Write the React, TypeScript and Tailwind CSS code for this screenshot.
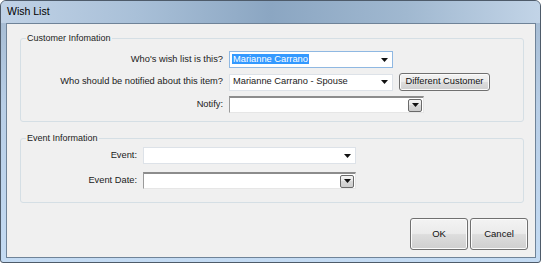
import React from "react"

function Arrow() {
  return (
    <svg width="7" height="4" viewBox="0 0 7 4" className="shrink-0">
      <polygon points="0,0 7,0 3.5,4" fill="#111" />
    </svg>
  )
}

function DropButton() {
  return (
    <div className="flex h-[13px] w-[14px] items-center justify-center rounded-[2px] border border-[#6a6a6a] bg-[linear-gradient(#f4f4f4,#e6e6e6_50%,#d8d8d8_50%,#cdcdcd)]">
      <Arrow />
    </div>
  )
}

function FlatCombo({ width, focused, children }: { width: string; focused?: boolean; children?: React.ReactNode }) {
  return (
    <div
      className={`flex h-[17px] items-center justify-between bg-white pl-[2px] pr-[4px] border ${width} ${
        focused ? "border-[#8fb8e2]" : "border-[#dde2e8]"
      }`}
    >
      <div className="truncate">{children}</div>
      <Arrow />
    </div>
  )
}

function SunkenCombo({ width }: { width: string }) {
  return (
    <div
      className={`flex h-[17px] items-center justify-end bg-white pr-[1px] border-t-2 border-l border-t-[#8c8c8c] border-l-[#9a9a9a] border-b border-r border-b-[#e6e6e6] border-r-[#e6e6e6] ${width}`}
    >
      <DropButton />
    </div>
  )
}

function WinButton({ className, children }: { className: string; children: React.ReactNode }) {
  return (
    <button
      className={`flex items-center justify-center rounded-[3px] border border-[#707070] bg-[linear-gradient(#f3f3f3,#ebebeb_48%,#dddddd_52%,#cfcfcf)] shadow-[inset_0_0_0_1px_#fbfbfb] text-[#111] ${className}`}
    >
      {children}
    </button>
  )
}

export default function App() {
  return (
    <div className="h-[264px] w-[541px] bg-white" style={{ fontFamily: '"Liberation Sans", Arial, sans-serif' }}>
      <div className="h-[263px] w-[541px] rounded-t-[6px] rounded-b-[3px] border border-[#4e5b6a] bg-[linear-gradient(to_bottom,#a3b9d0,#b8cee6_40%,#c4dbf3)]">
        {/* title bar */}
        <div className="flex h-[22px] items-center rounded-t-[5px] bg-[linear-gradient(to_right,#c0d2e6,#a9c0d8_25%,#8ba6c2_50%,#a0b8d0_75%,#c2d4e7)] pl-[6px] text-[10.5px] text-black">
          Wish List
        </div>

        <div className="ml-[5px] h-[235px] w-[530px] border border-[#6f8398] bg-[#f0f0f0] text-[9.3px] text-[#1b1b1b]">
          {/* Customer Information */}
          <div className="relative ml-[13px] mt-[14px] h-[84px] w-[504px] rounded-[3px] border border-[#d5dfe5]">
            <span className="absolute -top-[7px] left-[5px] bg-[#f0f0f0] px-[1px] text-[9px] leading-[12px]">
              Customer Infomation
            </span>
            <div className="mt-[12px] flex h-[17px] items-center">
              <div className="w-[202px] text-right">Who's wish list is this?</div>
              <div className="ml-[6px]">
                <FlatCombo width="w-[164px]" focused>
                  <span className="bg-[#3399ff] px-[1px] text-white">Marianne Carrano</span>
                </FlatCombo>
              </div>
            </div>
            <div className="mt-[5px] flex h-[18px] items-center">
              <div className="w-[202px] text-right">Who should be notified about this item?</div>
              <div className="ml-[6px]">
                <FlatCombo width="w-[164px]">
                  <span className="pl-[1px]">Marianne Carrano - Spouse</span>
                </FlatCombo>
              </div>
              <WinButton className="ml-[6px] h-[18px] w-[91px] text-[9.3px]">Different Customer</WinButton>
            </div>
            <div className="mt-[5px] flex h-[17px] items-center">
              <div className="w-[202px] text-right">Notify:</div>
              <div className="ml-[6px]">
                <SunkenCombo width="w-[195px]" />
              </div>
            </div>
          </div>

          {/* Event Information */}
          <div className="relative ml-[13px] mt-[16px] h-[65px] w-[504px] rounded-[3px] border border-[#d5dfe5]">
            <span className="absolute -top-[7px] left-[5px] bg-[#f0f0f0] px-[1px] text-[9px] leading-[12px]">
              Event Information
            </span>
            <div className="mt-[8px] flex h-[17px] items-center">
              <div className="w-[116px] text-right">Event:</div>
              <div className="ml-[6px]">
                <FlatCombo width="w-[213px]" />
              </div>
            </div>
            <div className="mt-[8px] flex h-[17px] items-center">
              <div className="w-[116px] text-right">Event Date:</div>
              <div className="ml-[6px]">
                <SunkenCombo width="w-[213px]" />
              </div>
            </div>
          </div>

          {/* buttons */}
          <div className="mr-[7px] mt-[15px] flex justify-end gap-[2px]">
            <WinButton className="h-[32px] w-[58px] text-[9.5px]">OK</WinButton>
            <WinButton className="h-[32px] w-[58px] text-[9.5px]">Cancel</WinButton>
          </div>
        </div>
      </div>
    </div>
  )
}
